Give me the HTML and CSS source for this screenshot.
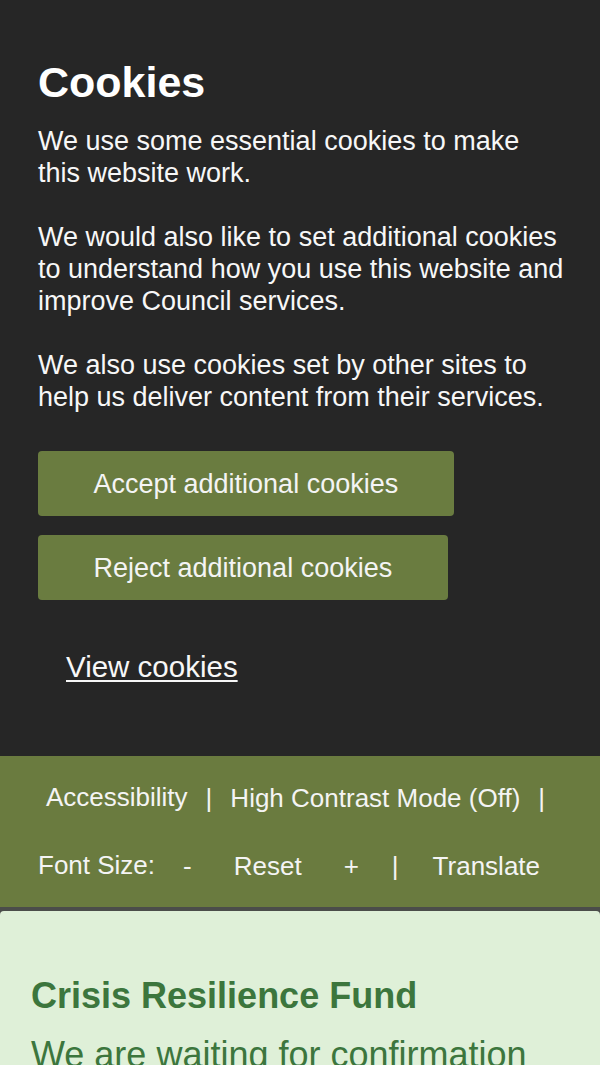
FILE: index.html
```html
<!DOCTYPE html>
<html lang="en">
<head>
<meta charset="utf-8">
<title>Cookies</title>
<link rel="stylesheet" href="styles.css">
</head>
<body>
<div class="cookie-banner">
  <h2 class="cookie-title">Cookies</h2>
  <p class="cookie-text">We use some essential cookies to make this website work.</p>
  <p class="cookie-text">We would also like to set additional cookies to understand how you use this website and improve Council services.</p>
  <p class="cookie-text">We also use cookies set by other sites to help us deliver content from their services.</p>
  <div class="cookie-actions">
    <button class="cookie-btn" type="button">Accept additional cookies</button>
    <button class="cookie-btn" type="button">Reject additional cookies</button>
  </div>
  <a class="cookie-link" href="#">View cookies</a>
</div>
<nav class="toolbar">
  <div class="toolbar-row row-one">
    <a class="tool-item lift" href="#">Accessibility</a>
    <span class="tool-sep">|</span>
    <a class="tool-item" href="#">High Contrast Mode (Off)</a>
    <span class="tool-sep">|</span>
  </div>
  <div class="toolbar-row row-two">
    <span class="tool-item lift">Font Size:</span>
    <button class="size-btn minus" type="button">-</button>
    <button class="size-btn" type="button">Reset</button>
    <button class="size-btn" type="button">+</button>
    <span class="tool-sep sep-two">|</span>
    <a class="tool-item translate" href="#">Translate</a>
  </div>
</nav>
<main class="notice">
  <h1 class="notice-title">Crisis Resilience Fund</h1>
  <p class="notice-text">We are waiting for confirmation from the government about this fund.</p>
</main>
</body>
</html>
```
FILE: styles.css
```css
* {
  box-sizing: border-box;
}

html, body {
  margin: 0;
  padding: 0;
}

body {
  background: #4b4d4a;
  font-family: "Liberation Sans", Arial, sans-serif;
}

.cookie-banner {
  background: #262626;
  color: #f7f7f7;
  padding: 58px 36px 71px 38px;
}

.cookie-title {
  margin: 0;
  font-size: 43px;
  line-height: 48px;
  font-weight: bold;
  color: #ffffff;
}

.cookie-text {
  margin: 32px 0 0;
  font-size: 27px;
  line-height: 32px;
}

.cookie-title + .cookie-text {
  margin-top: 19px;
}

.cookie-actions {
  margin-top: 38px;
  display: flex;
  flex-direction: column;
  align-items: flex-start;
  gap: 19px;
}

.cookie-btn {
  font-family: "Liberation Sans", Arial, sans-serif;
  font-size: 27px;
  line-height: 32px;
  padding: 16.5px 55.5px;
  border: 0;
  border-radius: 4px;
  background: #6a7c40;
  color: #f4f4f4;
  cursor: pointer;
}

.cookie-link {
  display: inline-block;
  margin-top: 49px;
  margin-left: 28px;
  font-size: 29.5px;
  line-height: 36px;
  color: #f7f7f7;
  text-decoration: underline;
  text-underline-offset: 3px;
  text-decoration-thickness: 2px;
}

.toolbar {
  background: #6a7b3f;
  color: #f4f4f4;
  padding: 8px 0 7px;
}

.toolbar-row {
  display: flex;
  align-items: center;
  height: 68px;
  font-size: 26px;
}

.row-one {
  padding-left: 46px;
  gap: 18px;
}

.row-two {
  padding-left: 38px;
}

.tool-item {
  color: #f4f4f4;
  text-decoration: none;
}

.lift {
  margin-bottom: 2px;
}

.tool-sep {
  color: #f4f4f4;
}

.size-btn {
  font-family: "Liberation Sans", Arial, sans-serif;
  font-size: 26px;
  background: none;
  border: 0;
  color: #f4f4f4;
  padding: 0 21px;
  margin: 0;
}

.minus {
  margin-left: 7px;
}

.sep-two {
  margin-left: 12px;
}

.translate {
  margin-left: 34px;
}

.notice {
  margin-top: 4px;
  background: #dff0d8;
  border-radius: 4px 4px 0 0;
  padding: 63px 30px 40px 31px;
  color: #3c763d;
}

.notice-title {
  margin: 0;
  font-size: 36px;
  line-height: 43px;
  font-weight: bold;
}

.notice-text {
  margin: 16px 0 0;
  font-size: 36px;
  line-height: 43px;
}
```
